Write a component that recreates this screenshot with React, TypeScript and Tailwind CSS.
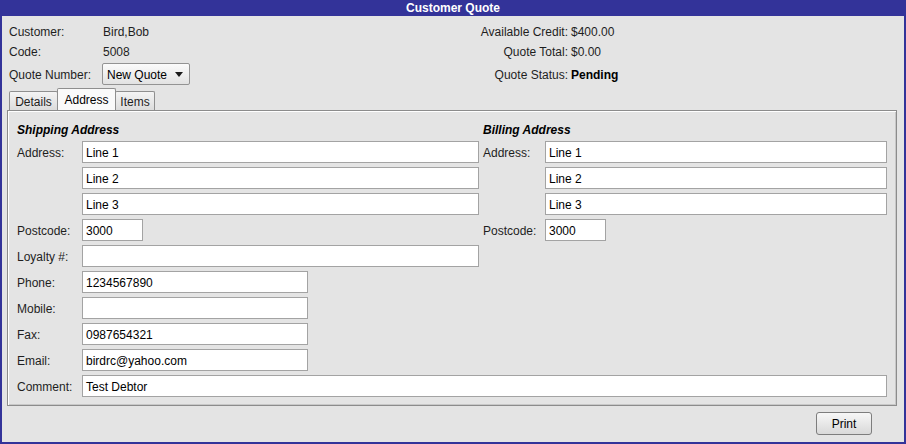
import React from "react";

const FONT = { fontFamily: '"Liberation Sans", Arial, sans-serif' };

function Field({ value = "", className = "" }: { value?: string; className?: string }) {
  return (
    <div
      className={`h-[22px] border border-[#a3a3a3] bg-white pl-[3px] pt-[1px] flex items-center text-[12px] text-black ${className}`}
    >
      {value}
    </div>
  );
}

function Label({ children }: { children: React.ReactNode }) {
  return <div className="flex items-center h-[22px] pt-[1px] text-[12px] text-[#1e1e1e]">{children}</div>;
}

export default function App() {
  return (
    <div style={FONT} className="w-[906px] h-[444px] bg-[#333399] flex flex-col">
      {/* Title */}
      <div className="h-[16px] leading-[16px] text-center text-white text-[12px] font-bold">
        Customer Quote
      </div>

      {/* Body */}
      <div className="flex-1 mx-[2px] mb-[2px] bg-[#e4e4e4] flex flex-col">
        {/* Header info */}
        <div className="pt-[5px] pl-[7px] grid grid-cols-[93px_296px_170px_1fr] grid-rows-[20px_22px_22px] text-[12px] text-[#1e1e1e]">
          <div className="flex items-center pt-[1px]">Customer:</div>
          <div className="flex items-center pt-[1px] pl-[1px]">Bird,Bob</div>
          <div className="flex items-center pt-[1px] justify-end">Available Credit:</div>
          <div className="flex items-center pt-[1px] pl-[3px]">$400.00</div>

          <div className="flex items-center -mt-[1px]">Code:</div>
          <div className="flex items-center -mt-[1px] pl-[1px]">5008</div>
          <div className="flex items-center justify-end -mt-[1px]">Quote Total:</div>
          <div className="flex items-center pl-[3px] -mt-[1px]">$0.00</div>

          <div className="flex items-center pt-[1px]">Quote Number:</div>
          <div className="flex items-center">
            <div className="w-[88px] h-[22px] border border-[#939393] rounded-[2px] bg-gradient-to-b from-[#fbfbfb] to-[#e2e2e2] flex items-center justify-between pl-[4px] pr-[6px] pt-[1px] text-black">
              <span>New Quote</span>
              <svg width="8" height="5" viewBox="0 0 8 5">
                <path d="M0 0 L8 0 L4 5 Z" fill="#1a1a1a" />
              </svg>
            </div>
          </div>
          <div className="flex items-center pt-[1px] justify-end">Quote Status:</div>
          <div className="flex items-center pt-[1px] pl-[3px] font-bold text-black">Pending</div>
        </div>

        {/* Tabs */}
        <div className="mt-[3px] ml-[7px] h-[22px] flex items-end text-[12px] text-[#1e1e1e]">
          <div className="h-[19px] w-[49px] border border-b-0 border-[#8f8f8f] rounded-t-[2px] bg-gradient-to-b from-[#f4f4f4] to-[#dcdcdc] flex items-center justify-center pt-[2px]">
            Details
          </div>
          <div className="h-[22px] w-[59px] -ml-[1px] border border-b-0 border-[#8f8f8f] rounded-t-[2px] bg-[#fafafa] flex items-start justify-center pt-[2px] text-black relative z-10">
            Address
          </div>
          <div className="h-[19px] w-[40px] -ml-[1px] border border-b-0 border-[#8f8f8f] rounded-t-[2px] bg-gradient-to-b from-[#f4f4f4] to-[#dcdcdc] flex items-center justify-center pt-[2px]">
            Items
          </div>
        </div>

        {/* Panel */}
        <div className="ml-[5px] mr-[7px] h-[296px] border border-[#8c8c8c] shadow-[inset_1px_1px_0_#ffffff,inset_-1px_-1px_0_#c8c8c8] pl-[9px] pt-[10px]">
          <div className="grid grid-cols-[65px_401px_62px_342px] gap-y-[4px] text-[12px]">
            <div className="col-span-2 h-[16px] flex items-center pt-[1px] font-bold italic text-black">
              Shipping Address
            </div>
            <div className="col-span-2 h-[16px] flex items-center pt-[1px] font-bold italic text-black">
              Billing Address
            </div>

            <Label>Address:</Label>
            <Field value="Line 1" className="w-[397px]" />
            <Label>Address:</Label>
            <Field value="Line 1" className="w-[342px]" />

            <div />
            <Field value="Line 2" className="w-[397px]" />
            <div />
            <Field value="Line 2" className="w-[342px]" />

            <div />
            <Field value="Line 3" className="w-[397px]" />
            <div />
            <Field value="Line 3" className="w-[342px]" />

            <Label>Postcode:</Label>
            <Field value="3000" className="w-[61px]" />
            <Label>Postcode:</Label>
            <Field value="3000" className="w-[61px]" />

            <Label>Loyalty #:</Label>
            <Field className="w-[397px]" />
            <div className="col-span-2" />

            <Label>Phone:</Label>
            <Field value="1234567890" className="w-[226px]" />
            <div className="col-span-2" />

            <Label>Mobile:</Label>
            <Field className="w-[226px]" />
            <div className="col-span-2" />

            <Label>Fax:</Label>
            <Field value="0987654321" className="w-[226px]" />
            <div className="col-span-2" />

            <Label>Email:</Label>
            <Field value="birdrc@yahoo.com" className="w-[226px]" />
            <div className="col-span-2" />

            <Label>Comment:</Label>
            <Field value="Test Debtor" className="col-span-3 w-[805px]" />
          </div>
        </div>

        {/* Buttons */}
        <div className="pt-[6px] pr-[32px] flex justify-end">
          <div className="w-[56px] h-[23px] border border-[#7d7d7d] rounded-[3px] bg-gradient-to-b from-[#f7f7f7] to-[#d9d9d9] flex items-center justify-center pt-[1px] text-[12px] text-black">
            Print
          </div>
        </div>
      </div>
    </div>
  );
}
